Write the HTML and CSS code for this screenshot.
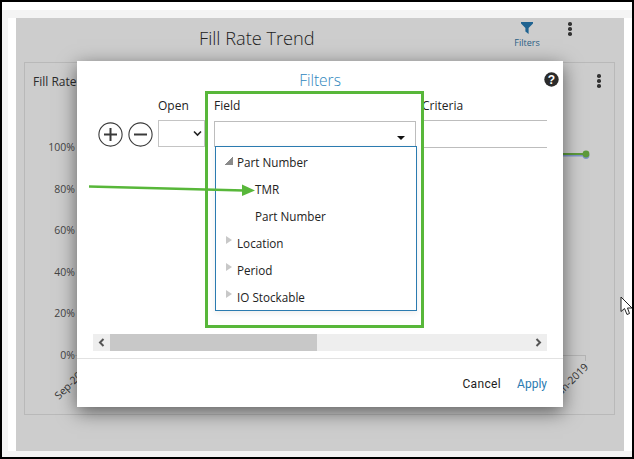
FILE: index.html
```html
<!DOCTYPE html>
<html lang="en">
<head>
<meta charset="utf-8">
<title>Fill Rate Trend</title>
<link rel="stylesheet" href="styles.css">
</head>
<body>
<div class="frame">
  <div class="topbar"></div>
  <div class="body">
    <div class="sheet">
      <div class="stage">
        <header class="head">
          <h1 class="page-title">Fill Rate Trend</h1>
          <div class="filters-btn">
            <svg class="funnel" width="12" height="12" viewBox="0 0 12 12"><path d="M0 0H12V1.6L7.6 6V12L4.4 9.6V6L0 1.6Z"/></svg>
            <span>Filters</span>
          </div>
          <div class="dots head-dots"><i></i><i></i><i></i></div>
        </header>
        <section class="card">
          <div class="card-head">
            <span class="card-title">Fill Rate</span>
            <div class="dots card-dots"><i></i><i></i><i></i></div>
          </div>
          <div class="chart">
            <div class="y-axis">
              <span>100%</span><span>80%</span><span>60%</span><span>40%</span><span>20%</span><span>0%</span>
            </div>
            <div class="plot">
              <svg class="series" width="40" height="12" viewBox="0 0 40 12"><path class="s-blue" d="M0 6.5H29"/><circle class="s-blue-dot" cx="29" cy="6.5" r="3.4"/><path class="s-green" d="M0 5H29"/><circle class="s-green-dot" cx="29" cy="5" r="3.4"/></svg>
              <div class="x-axis"></div>
              <span class="x-label x-first">Sep-2018</span>
              <span class="x-label x-last">Jun-2019</span>
            </div>
          </div>
        </section>

        <div class="modal">
          <div class="modal-head">
            <h2 class="modal-title">Filters</h2>
            <svg class="help" width="15" height="15" viewBox="0 0 15 15"><circle cx="7.5" cy="7.5" r="7.2" fill="#2b2b2b"/><text x="7.5" y="11.6" text-anchor="middle" class="help-q">?</text></svg>
          </div>
          <div class="modal-body">
            <div class="rows">
              <div class="col col-btns">
                <svg class="round" width="25" height="25" viewBox="0 0 25 25"><circle cx="12.5" cy="12.5" r="11.6"/><path d="M12.5 6V19M6 12.5H19"/></svg>
                <svg class="round" width="25" height="25" viewBox="0 0 25 25"><circle cx="12.5" cy="12.5" r="11.6"/><path d="M6 12.5H19"/></svg>
              </div>
              <div class="col col-open">
                <label class="col-label">Open</label>
                <div class="select-box">
                  <svg class="chev" width="9" height="7" viewBox="0 0 9 7"><path d="M1 1.5L4.5 5L8 1.5"/></svg>
                </div>
              </div>
              <div class="col col-field">
                <label class="col-label">Field</label>
                <div class="field-box"><span class="caret"></span></div>
                <ul class="tree">
                  <li class="tree-row"><span class="tri tri-open"></span>Part Number</li>
                  <li class="tree-row tree-leaf">TMR</li>
                  <li class="tree-row tree-leaf">Part Number</li>
                  <li class="tree-row"><span class="tri"></span>Location</li>
                  <li class="tree-row"><span class="tri"></span>Period</li>
                  <li class="tree-row"><span class="tri"></span>IO Stockable</li>
                </ul>
              </div>
              <div class="col col-criteria">
                <label class="col-label">Criteria</label>
                <div class="criteria-box"></div>
              </div>
            </div>
            <div class="hscroll">
              <svg class="sb-arrow" width="17" height="17" viewBox="0 0 17 17"><path d="M10.5 5L7 8.5L10.5 12"/></svg>
              <div class="sb-track"><div class="sb-thumb"></div></div>
              <svg class="sb-arrow" width="17" height="17" viewBox="0 0 17 17"><path d="M6.5 5L10 8.5L6.5 12"/></svg>
            </div>
          </div>
          <footer class="modal-foot">
            <button class="btn">Cancel</button>
            <button class="btn btn-apply">Apply</button>
          </footer>
        </div>
      </div>
    </div>
  </div>
  <div class="callout"></div>
  <svg class="arrow" width="170" height="14" viewBox="0 0 170 14"><path class="arrow-line" d="M0 3.5L155 7.5"/><path class="arrow-head" d="M153 1.5L166 7.5L153 13Z"/></svg>
  <svg class="cursor" width="13" height="21" viewBox="0 0 13 21"><path d="M1 1V15.5L4.5 12.5L7 18.5L9.5 17.5L7.5 12H12Z" fill="#fff" stroke="#222" stroke-width="1"/></svg>
</div>
</body>
</html>
```
FILE: styles.css
```css
* { box-sizing: border-box; }
html, body { margin: 0; padding: 0; background: #fff; }
body { font-family: "Open Sans", "Liberation Sans", sans-serif; color: #1d1d1d; }
h1, h2, ul { margin: 0; padding: 0; font-weight: 400; }
ul { list-style: none; }

.frame {
  position: relative;
  width: 634px;
  height: 459px;
  border: 2px solid #000;
  background: #f4f4f4;
  display: flex;
  flex-direction: column;
  overflow: hidden;
}
.topbar { height: 8px; background: #fff; flex: none; }
.body { flex: 1; padding: 8px 0 6px 6px; display: flex; min-height: 0; }
.sheet { flex: 1; background: #fff; padding: 0 8px; display: flex; }
.stage {
  position: relative;
  flex: 1;
  background: #cdcdcd;
  padding: 0 9px 36px 8px;
  display: flex;
  flex-direction: column;
}

.head { height: 44px; flex: none; display: flex; align-items: flex-start; }
.page-title {
  font-size: 18.2px;
  font-weight: 300;
  line-height: 26px;
  color: #222;
  margin: 7px 0 0 175px;
  width: 132px;
  white-space: nowrap;
}
.filters-btn {
  margin: 4px 0 0 183px;
  display: flex;
  flex-direction: column;
  align-items: center;
  width: 26px;
  font-size: 9px;
  line-height: 12px;
  color: #2b6186;
}
.funnel { fill: #1f6391; display: block; }
.filters-btn span { margin-top: 3px; }
.dots { display: flex; flex-direction: column; gap: 1.5px; width: 4px; }
.dots i { display: block; width: 3.6px; height: 3.6px; border-radius: 50%; background: #333; }
.head-dots { margin: 4px 0 0 28px; }

.card {
  flex: 1;
  border: 1px solid #b9b9b9;
  display: flex;
  flex-direction: column;
}
.card-head { height: 37px; flex: none; display: flex; justify-content: space-between; padding: 11px 13px 0 8px; }
.card-title { font-size: 12px; line-height: 15px; color: #2c2c2c; }
.card-dots { margin-top: 0; }

.chart { flex: 1; display: flex; min-height: 0; }
.y-axis {
  width: 50px;
  height: 222px;
  margin-top: 40px;
  display: flex;
  flex-direction: column;
  justify-content: space-between;
  align-items: flex-end;
  font-size: 10.5px;
  line-height: 14px;
  color: #444;
  flex: none;
}
.plot { position: relative; flex: 1; }
.series { position: absolute; left: 482px; top: 49px; fill: none; }
.s-blue { stroke: #7d93c8; stroke-width: 2; }
.s-blue-dot { fill: #7d93c8; }
.s-green { stroke: #5d9a3c; stroke-width: 2; }
.s-green-dot { fill: #5d9a3c; }
.x-axis { position: absolute; left: 0; top: 255px; width: 511px; height: 6px; border-top: 1px solid #b4b4b4; border-right: 1px solid #b4b4b4; }
.x-label {
  position: absolute;
  font-size: 10.5px;
  line-height: 14px;
  color: #333;
  white-space: nowrap;
  transform: rotate(-45deg);
  transform-origin: right top;
}
.x-first { right: 531px; top: 260px; }
.x-last { right: 33px; top: 260px; }

.modal {
  position: absolute;
  z-index: 1;
  left: 61px;
  top: 43px;
  width: 486px;
  height: 346px;
  background: #fff;
  box-shadow: 0 5px 18px rgba(0, 0, 0, .55);
  display: flex;
  flex-direction: column;
}
.modal-head { height: 37px; flex: none; display: flex; justify-content: center; padding-top: 9px; position: relative; }
.modal-title { font-size: 15.5px; line-height: 20px; color: #2e86bd; font-weight: 300; }
.help { position: absolute; top: 11px; right: 4px; }
.help-q { font-family: "Liberation Sans", sans-serif; font-size: 12px; font-weight: 700; fill: #fff; }

.modal-body { flex: none; padding: 0 16px; display: flex; flex-direction: column; }
.rows { height: 236px; flex: none; display: flex; align-items: flex-start; }
.col { flex: none; }
.col-label { display: block; font-size: 12px; line-height: 15px; color: #222; height: 22px; }

.col-btns { display: flex; gap: 5px; padding: 24px 0 0 5px; width: 65px; }
.round { fill: none; stroke: #3a3a3a; }
.round circle { stroke-width: 1.1; }
.round path { stroke-width: 2; }

.col-open { width: 56px; }
.select-box {
  width: 47px;
  height: 27px;
  border: 1px solid #c4c4c4;
  display: flex;
  align-items: center;
  justify-content: flex-end;
  padding-right: 2px;
}
.chev { fill: none; stroke: #222; stroke-width: 1.6; }

.col-field { width: 208px; position: relative; }
.field-box {
  width: 202px;
  height: 26px;
  margin-top: 1px;
  border: 1px solid #bdbdbd;
  position: relative;
}
.caret {
  position: absolute;
  right: 10px;
  top: 14px;
  border-left: 4px solid transparent;
  border-right: 4px solid transparent;
  border-top: 4px solid #111;
}
.tree {
  position: absolute;
  left: 1px;
  top: 48px;
  width: 202px;
  height: 165px;
  border: 1px solid #2b7bb0;
  background: #fff;
  padding-top: 1px;
  z-index: 1;
  box-shadow: 0 2px 6px rgba(0, 0, 0, .08);
}
.tree-row {
  height: 27px;
  display: flex;
  align-items: center;
  font-size: 11.7px;
  color: #222;
  position: relative;
  padding-left: 21px;
}
.tree-leaf { padding-left: 39px; }
.tri {
  position: absolute;
  left: 10px;
  top: 7px;
  border-top: 4.5px solid transparent;
  border-bottom: 4.5px solid transparent;
  border-left: 6px solid #c8c8c8;
}
.tri-open {
  left: 9px;
  top: 9px;
  border: 0;
  width: 8px;
  height: 8px;
  background: linear-gradient(135deg, transparent 50%, #8a8a8a 50%);
}

.col-criteria { flex: 1; }
.criteria-box { height: 28px; border-top: 1px solid #bdbdbd; border-bottom: 1px solid #bdbdbd; }

.hscroll { height: 17px; flex: none; display: flex; background: #eee; }
.sb-arrow { flex: none; fill: none; stroke: #555; stroke-width: 2; }
.sb-track { flex: 1; }
.sb-thumb { width: 207px; height: 17px; background: #c8c8c8; }

.modal-foot {
  margin-top: 7px;
  flex: 1;
  border-top: 1px solid #e2e2e2;
  display: flex;
  justify-content: flex-end;
  align-items: center;
  gap: 16px;
  padding: 1px 16px 0 0;
}
.btn { border: 0; background: none; padding: 0; font: 12px/16px Roboto, "Liberation Sans", sans-serif; color: #1d1d1d; letter-spacing: .35px; }
.btn-apply { color: #2b7bb0; letter-spacing: 0; }

.callout {
  position: absolute;
  z-index: 2;
  left: 203px;
  top: 89px;
  width: 219px;
  height: 237px;
  border: 3px solid #58b73a;
  pointer-events: none;
}
.arrow { position: absolute; z-index: 3; left: 87px; top: 181px; }
.arrow-line { stroke: #58b73a; stroke-width: 2.6; fill: none; }
.arrow-head { fill: #58b73a; }
.cursor { position: absolute; z-index: 3; left: 618px; top: 294px; }
```
